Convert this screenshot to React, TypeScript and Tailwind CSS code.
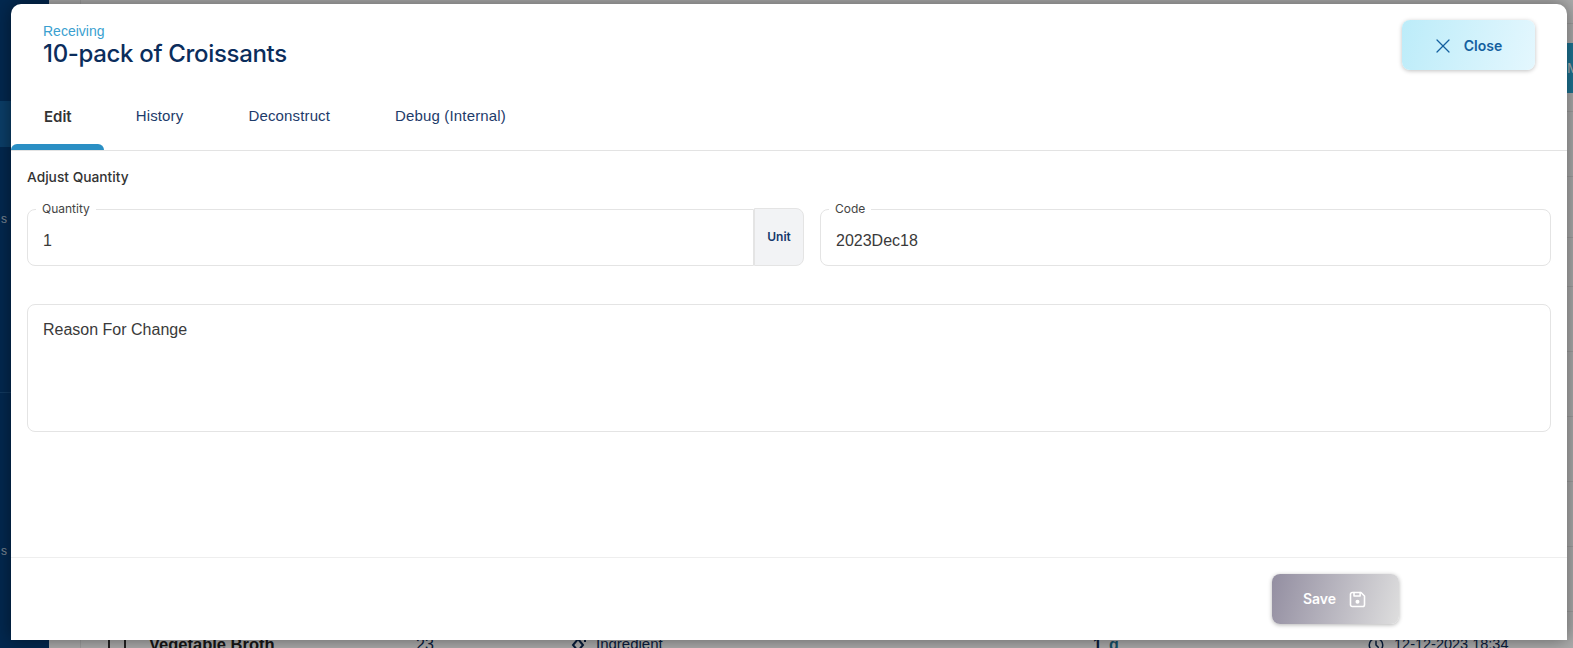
import { X } from 'lucide-react'
import { TbClock } from 'react-icons/tb'

const sans = "font-['Liberation_Sans',Arial,sans-serif]"
const inter = "font-['Inter',sans-serif]"

const ROW_HEIGHTS = [24, 88, 65, 61, 49, 65, 65, 65, 65, 65]
const TABS = ['History', 'Deconstruct', 'Debug (Internal)']

function Background() {
  return (
    <div className={`flex h-[648px] w-[1573px] overflow-hidden bg-[#f6f6f6] ${sans}`}>
      <aside className="flex w-[49px] shrink-0 flex-col bg-[#053a71]">
        <div className="h-[101px]" />
        <div className="h-[46px] bg-[#115a96]" />
        <div className="h-[246px] border-b border-[#1a5288] pt-[64px] text-right text-xs text-white/70">
          <span className="mr-[42px]">s</span>
        </div>
        <div className="pt-[150px] text-right text-xs text-white/70">
          <span className="mr-[42px]">s</span>
        </div>
      </aside>
      <div className="w-[32px] shrink-0 border-r border-[#e3e3e3]" />
      <main className="min-w-0 flex-1">
        {ROW_HEIGHTS.map((height, i) => (
          <div
            key={i}
            className="flex items-center justify-end border-b border-[#e3e3e3]"
            style={{ height }}
          >
            {i === 1 && (
              <div className="flex h-[50px] w-[120px] items-center justify-end bg-[#2ca8d6] text-sm text-white">
                <span className="-mr-[4px] w-[10px]">M</span>
              </div>
            )}
          </div>
        ))}
        <div className="flex h-[65px] items-center text-[#0d2c57]">
          <div className="ml-[27px] h-[24px] w-[18px] shrink-0 rounded-sm border-2 border-[#333]" />
          <span className="ml-[23px] w-[267px] shrink-0 text-[16.5px] font-bold text-[#222]">Vegetable Broth</span>
          <span className="w-[154px] shrink-0 text-base">23</span>
          <svg viewBox="0 0 18 18" className="size-[18px] shrink-0" fill="none" stroke="currentColor" strokeWidth="2">
            <path d="M8 3l5 6-5 6-5-6z" />
            <path d="M15 3v3" />
          </svg>
          <span className="ml-[8px] w-[497px] shrink-0 text-[15px]">Ingredient</span>
          <span className="w-[16px] shrink-0 text-base font-bold">1</span>
          <span className="w-[258px] shrink-0 text-base font-bold text-[#1f7696]">g</span>
          <TbClock className="size-[18px] shrink-0" />
          <span className="ml-[9px] text-[14.5px]">12-12-2023 18:34</span>
        </div>
      </main>
    </div>
  )
}

function Fieldset({ label, value, className }: { label: string; value: string; className: string }) {
  return (
    <fieldset className={`h-[64px] border border-[#e4e4e4] pl-[8px] ${className}`}>
      <legend className={`px-[6px] text-xs leading-[14px] text-[#444] ${inter}`}>{label}</legend>
      <div className={`mt-[7px] pl-[7px] text-base leading-[36px] text-[#3a3a3a] ${sans}`}>{value}</div>
    </fieldset>
  )
}

export default function App() {
  return (
    <div className="relative h-[648px] w-[1573px] overflow-hidden">
      <Background />
      <div className="absolute inset-0 bg-black/30" />

      <div className={`absolute left-[11px] top-[4px] flex h-[636px] w-[1556px] flex-col rounded-t-[10px] bg-white shadow-[0_0_18px_rgba(0,0,0,0.45)] ${sans}`}>
        {/* Header */}
        <div className="flex h-[84px] shrink-0 items-start justify-between pl-[32px] pr-[32px] pt-[16px]">
          <div className="pt-[3px]">
            <p className="text-sm leading-[16px] text-[#3a9fd0]">Receiving</p>
            <h2 className={`text-[24px] font-medium leading-[30px] tracking-[-0.33px] text-[#0b2d5c] ${inter}`}>
              10-pack of Croissants
            </h2>
          </div>
          <button className={`flex h-[50px] w-[133px] items-center justify-center gap-[9px] rounded-lg bg-[linear-gradient(105deg,#bcecf9,#e4f7fe)] pr-[4px] pt-px text-sm font-semibold text-[#14609f] shadow-[0_1px_4px_rgba(0,0,0,0.25)] ${inter}`}>
            <X className="size-[24px]" strokeWidth={1.25} />
            Close
          </button>
        </div>

        {/* Tabs */}
        <div className="flex h-[63px] shrink-0 border-b border-[#e3e3e3] text-[15px]">
          <div className={`relative flex h-[62px] items-center pl-[33px] pr-[32px] pb-[4px] font-semibold text-[#333] ${inter}`}>
            Edit
            <div className="absolute inset-x-0 bottom-0 h-[6px] rounded-t-md bg-[#2a8fc4]" />
          </div>
          {TABS.map((tab) => (
            <div key={tab} className="flex h-[62px] items-center pl-[32px] pr-[33px] pb-[6px] tracking-[0.15px] text-[#1d3b6a]">
              {tab}
            </div>
          ))}
        </div>

        {/* Form */}
        <div className="flex-1 px-[16px]">
          <h3 className={`mt-[17px] text-[13.75px] font-medium leading-[18px] text-[#333] ${inter}`}>Adjust Quantity</h3>
          <div className="mt-[16px] flex gap-[16px]">
            <div className="flex w-[777px] items-end">
              <Fieldset label="Quantity" value="1" className="flex-1 rounded-l-lg" />
              <div className={`flex h-[58px] w-[50px] items-center justify-center rounded-r-lg border border-[#e4e4e4] bg-[#f2f3f5] text-xs font-semibold text-[#14386b] ${inter}`}>
                Unit
              </div>
            </div>
            <Fieldset label="Code" value="2023Dec18" className="flex-1 rounded-lg" />
          </div>
          <div className="mt-[38px] h-[128px] rounded-lg border border-[#e4e4e4] px-[15px] py-[15px] text-base leading-[20px] text-[#3a3a3a]">
            Reason For Change
          </div>
        </div>

        {/* Footer */}
        <div className="flex h-[83px] shrink-0 items-start justify-end border-t border-[#eeeeee] pr-[168px] pt-[16px]">
          <button className={`flex h-[50px] w-[127px] items-center justify-center gap-[11px] rounded-lg bg-[linear-gradient(105deg,#938ea1,#dedede)] text-sm font-semibold text-white shadow-[0_1px_4px_rgba(0,0,0,0.3)] ${inter}`}>
            Save
            <svg viewBox="0 0 24 24" className="size-[21px]" fill="none" stroke="currentColor" strokeWidth="1.8" strokeLinecap="round" strokeLinejoin="round">
              <path d="M6 4h10l4 4v10a2 2 0 0 1-2 2H6a2 2 0 0 1-2-2V6a2 2 0 0 1 2-2" />
              <path d="M15 4v4H8V4" />
              <circle cx="12" cy="14.5" r="1.4" fill="currentColor" />
            </svg>
          </button>
        </div>
      </div>
    </div>
  )
}
